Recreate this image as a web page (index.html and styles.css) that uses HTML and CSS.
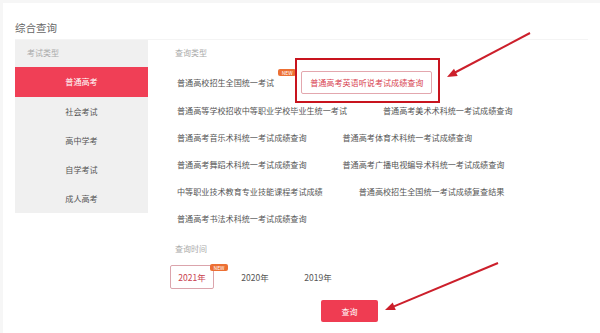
FILE: index.html
```html
<!DOCTYPE html>
<html lang="zh-CN">
<head>
  <meta charset="UTF-8">
  <title>综合查询</title>
  <meta name="viewport" content="width=device-width, initial-scale=1.0">
  <link rel="stylesheet" href="styles.css">
</head>
<body>
  <div class="page">
    <div class="card">
      <h2 class="title">综合查询</h2>
      <div class="query">
        <div class="side">
          <div class="side-label">考试类型</div>
          <ul class="side-list">
            <li class="active">普通高考</li>
            <li>社会考试</li>
            <li>高中学考</li>
            <li>自学考试</li>
            <li>成人高考</li>
          </ul>
        </div>
        <div class="main">
          <div class="label">查询类型</div>
          <ul class="types">
            <li class="type">普通高校招生全国统一考试<span class="badge">NEW</span></li>
            <li class="type type-btn">普通高考英语听说考试成绩查询<span class="mark"></span></li>
            <li class="type">普通高等学校招收中等职业学校毕业生统一考试</li>
            <li class="type">普通高考美术术科统一考试成绩查询</li>
            <li class="type">普通高考音乐术科统一考试成绩查询</li>
            <li class="type">普通高考体育术科统一考试成绩查询</li>
            <li class="type">普通高考舞蹈术科统一考试成绩查询</li>
            <li class="type">普通高考广播电视编导术科统一考试成绩查询</li>
            <li class="type">中等职业技术教育专业技能课程考试成绩</li>
            <li class="type">普通高校招生全国统一考试成绩复查结果</li>
            <li class="type">普通高考书法术科统一考试成绩查询</li>
          </ul>
          <div class="label label-time">查询时间</div>
          <ul class="years">
            <li class="year active">2021年<span class="badge">NEW</span></li>
            <li class="year">2020年</li>
            <li class="year">2019年</li>
          </ul>
          <button class="submit">查询</button>
        </div>
      </div>
    </div>

    <!-- annotation arrows -->
    <svg class="arrows" width="600" height="333" viewBox="0 0 600 333">
      <line x1="530" y1="33" x2="455" y2="72.5" stroke="#cc1f2b" stroke-width="2"/>
      <polygon points="447,77 457.7,75.9 454,68.8" fill="#cc1f2b"/>
      <line x1="498" y1="263" x2="394" y2="306.3" stroke="#cc1f2b" stroke-width="2"/>
      <polygon points="385,310 395.8,309.9 392.7,302.5" fill="#cc1f2b"/>
    </svg>
  </div>
</body>
</html>
```

FILE: styles.css
```css
body { margin: 0; background: #f6f6f6; font-family: "Noto Sans CJK SC", "Noto Sans", sans-serif; }
ul { list-style: none; margin: 0; padding: 0; }
.page { position: relative; width: 600px; height: 333px; overflow: hidden; }
.card { margin: 3px 0 0 3px; height: 330px; background: #fff; padding: 18px 12px 0 12px; box-sizing: border-box; }
.title { margin: 0; font-size: 10.5px; line-height: 14px; font-weight: normal; color: #666; }
.query { display: flex; margin-top: 4px; border-top: 1px solid #f4f4f4; }
.side { width: 133px; background: #f0f0f0; padding-top: 7px; align-self: flex-start; }
.side-label { padding-left: 12px; font-size: 8px; line-height: 12px; color: #aaa; margin-bottom: 8px; }
.side-list li { height: 29px; line-height: 29px; text-align: center; font-size: 8.1px; color: #555; }
.side-list li.active { height: 30px; line-height: 30px; background: #f03f56; color: #fff; }
.main { flex: 1; padding: 7px 0 0 27px; }
.label { font-size: 8px; line-height: 12px; color: #aaa; margin-bottom: 12px; }
.types { display: flex; flex-wrap: wrap; align-items: center; column-gap: 36px; row-gap: 7px; padding-left: 2px; }
.type { position: relative; font-size: 8.1px; line-height: 20px; color: #555; white-space: nowrap; }
.type-btn { margin-left: -9px; height: 23px; line-height: 21px; padding: 0 8px; border: 1px solid #e3a7ae; border-radius: 2px; color: #d8424f; box-sizing: border-box; }
.mark { position: absolute; left: -7px; top: -14px; right: -9px; bottom: -10px; border: 2px solid #c8141e; }
.badge { position: absolute; right: -22px; top: -4px; width: 18px; height: 7px; line-height: 7px; background: #ec7034; color: #fff; font-size: 5px; text-align: center; border-radius: 2px; }
.label-time { margin-top: 14px; margin-bottom: 10px; }
.years { display: flex; gap: 19px; margin-left: -5px; }
.year { position: relative; width: 44px; height: 24px; line-height: 22px; border: 1px solid transparent; box-sizing: border-box; text-align: center; font-size: 8.5px; color: #555; border-radius: 2px; }
.year.active { border-color: #dba4ac; color: #c9404f; }
.year .badge { right: -15px; top: -2px; }
.submit { display: block; margin: 11px 0 0 146px; width: 57px; height: 22px; border: none; border-radius: 2px; background: #ef3c52; color: #fff; font-family: inherit; font-size: 8px; padding: 0; }
.arrows { position: absolute; left: 0; top: 0; pointer-events: none; }
```
